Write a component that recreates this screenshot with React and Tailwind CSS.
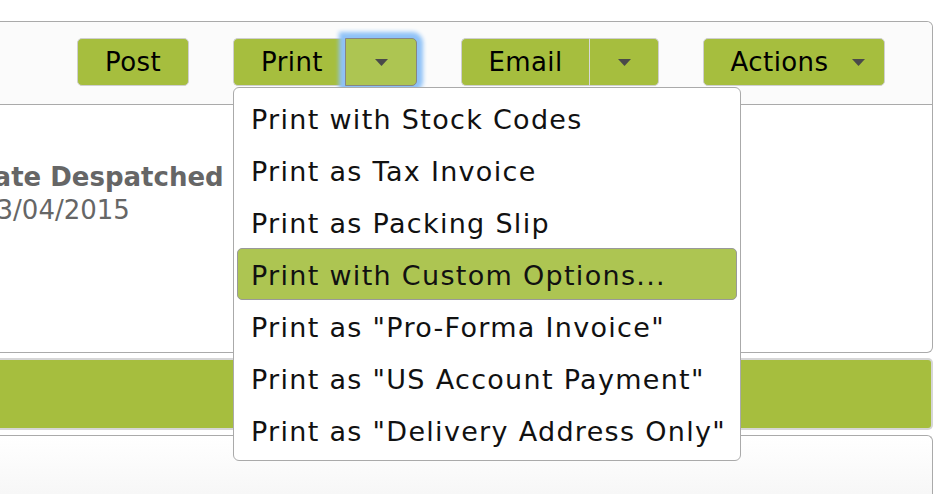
function Caret() {
  return (
    <svg width="13" height="7" viewBox="0 0 13 7" className="block">
      <path d="M0 0 L13 0 L6.5 7 Z" fill="#4a4a4a" />
    </svg>
  );
}

const btn =
  "h-[48px] bg-[#a6be3e] border border-[#cfcfcf] text-black text-[26px] tracking-[0.4px] flex items-center justify-center";

const items = [
  "Print with Stock Codes",
  "Print as Tax Invoice",
  "Print as Packing Slip",
  "Print with Custom Options...",
  'Print as "Pro-Forma Invoice"',
  'Print as "US Account Payment"',
  'Print as "Delivery Address Only"',
];

export default function App() {
  return (
    <div className="relative w-[952px] h-[494px] overflow-hidden bg-white font-['DejaVu_Sans',sans-serif]">
      <div className="pt-[21px] pr-[19px]">
        {/* top panel */}
        <div className="border-y border-r border-[#aaaaaa] rounded-r-[6px]">
          <div className="h-[83px] bg-[#fbfbfb] border-b border-[#aaaaaa] rounded-tr-[6px] pt-[16px] pl-[77px] flex items-start gap-[44px]">
            <div className={`${btn} w-[112px] rounded-[5px]`}>Post</div>

            <div className="flex">
              <div className={`${btn} w-[112px] rounded-l-[5px] border-r-0 pl-[5px]`}>Print</div>
              <div className="h-[48px] w-[72px] bg-[#adc552] border border-[#858585] rounded-r-[5px] flex items-center justify-center shadow-[0_0_4px_6px_#8fc2f7]">
                <Caret />
              </div>
            </div>

            <div className="flex">
              <div className={`${btn} w-[128px] rounded-l-[5px] border-r-0`}>Email</div>
              <div className={`${btn} w-[70px] rounded-r-[5px] border-l border-l-[#d8d8d8]`}>
                <Caret />
              </div>
            </div>

            <div className={`${btn} w-[182px] rounded-[5px] gap-[24px] pl-[8px]`}>
              <span>Actions</span>
              <Caret />
            </div>
          </div>

          <div className="h-[247px] pt-[56px] -ml-[22px] text-[#666666] text-[26px] leading-[33px]">
            <div className="font-bold -ml-[6px]">Date Despatched</div>
            <div className="pl-[2px]">13/04/2015</div>
          </div>
        </div>

        {/* green bar */}
        <div className="mt-[5px] h-[72px] bg-[#a6be3e] border-y-2 border-r-2 border-[#d6d6d6] rounded-r-[5px]" />

        {/* lower panel */}
        <div className="mt-[5px] h-[80px] border-t border-r border-[#aaaaaa] rounded-tr-[6px] bg-gradient-to-b from-white to-[#f4f4f4]" />
      </div>

      {/* dropdown menu */}
      <div className="absolute left-[233px] top-[87px] w-[508px] h-[374px] bg-white border border-[#aaaaaa] rounded-[6px] pt-[4px] px-[3px]">
        {items.map((t, i) => (
          <div
            key={t}
            className={
              i === 3
                ? "h-[52px] flex items-center pt-[5px] pl-[13px] text-[27px] tracking-[1.3px] text-[#111111] bg-[#adc552] border border-[#999999] rounded-[5px]"
                : "h-[52px] flex items-center pt-[5px] pl-[13px] text-[27px] tracking-[1.3px] text-[#111111] border border-transparent"
            }
          >
            {t}
          </div>
        ))}
      </div>
    </div>
  );
}
